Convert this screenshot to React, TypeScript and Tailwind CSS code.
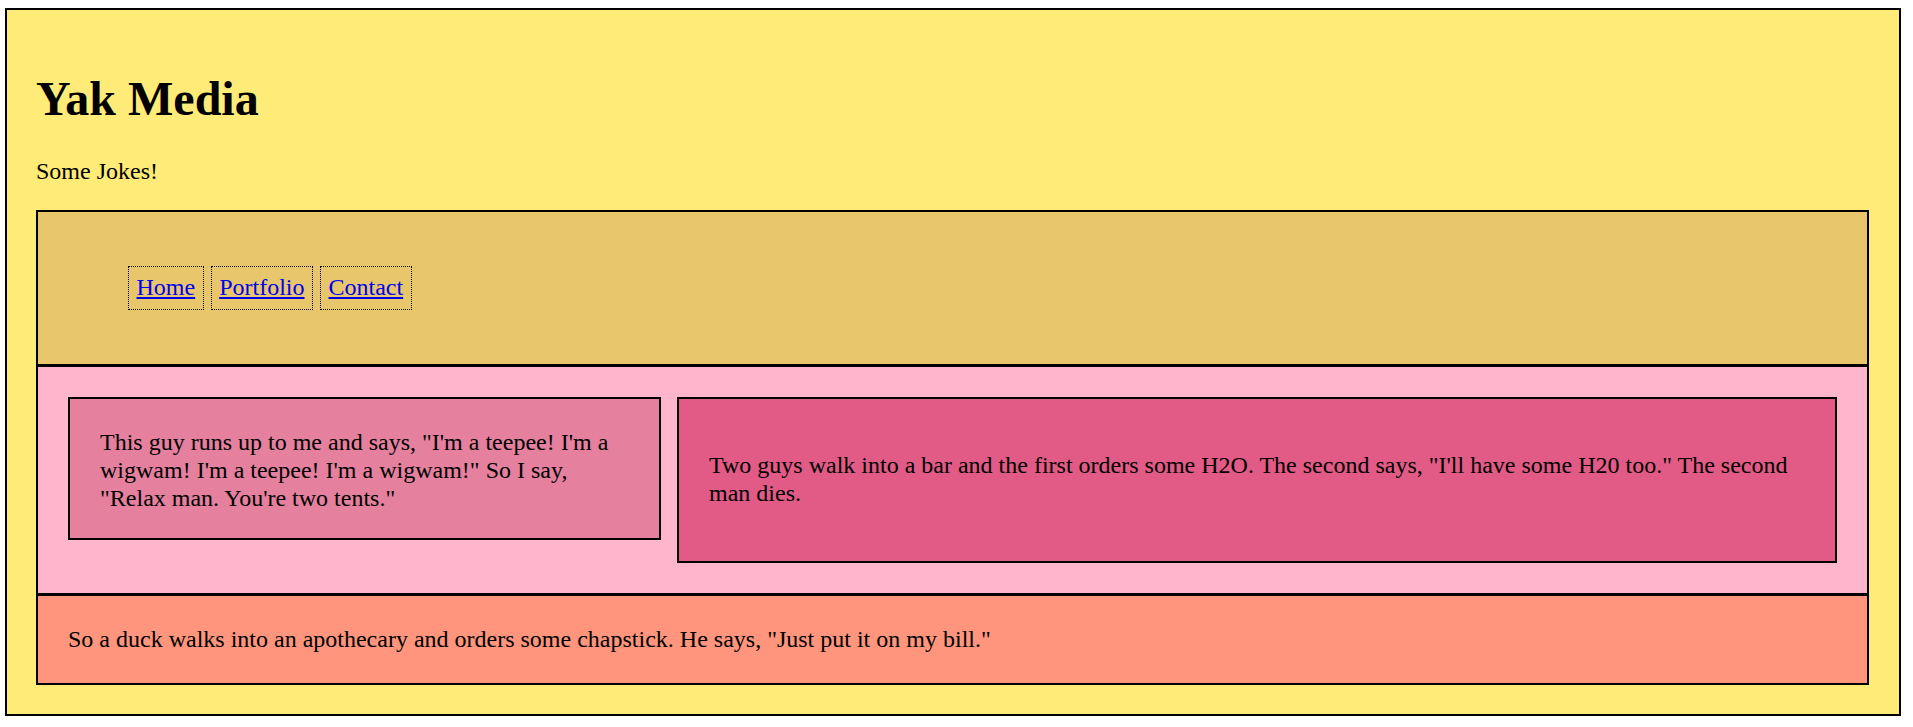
import React from 'react';

const links = ['Home', 'Portfolio', 'Contact'];

export default function App() {
  return (
    <div className="min-h-screen bg-white pt-[8px] pl-[5px] font-['Liberation_Serif',serif] text-[24px] leading-[27.6px] text-black">
      <div className="w-[1896px] border-2 border-black bg-[#ffeb77] pl-[29px] pr-[30px] pt-[29px] pb-[29px]">
        {/* Header */}
        <h1 className="my-[32px] text-[48px] font-bold leading-[55.2px]">Yak Media</h1>
        <p className="mb-[24px]">Some Jokes!</p>

        {/* Nav */}
        <nav className="border-2 border-b border-black bg-[#e8c66b] p-[30px]">
          <ul className="my-[24px] flex gap-[7px] pl-[60px]">
            {links.map((l) => (
              <li key={l}>
                <a
                  href="#"
                  className="block border border-dotted border-black p-[7.5px] text-[#0000ee] underline"
                >
                  {l}
                </a>
              </li>
            ))}
          </ul>
        </nav>

        {/* Jokes */}
        <main className="flex items-start gap-[16px] border-2 border-b border-black bg-[#ffb5cc] p-[30px]">
          <div className="w-[593px] shrink-0 border-2 border-black bg-[#e5809f] px-[30px] pt-[30px] pb-[26px]">
            This guy runs up to me and says, "I'm a teepee! I'm a wigwam! I'm a teepee! I'm a wigwam!" So I say,
            "Relax man. You're two tents."
          </div>
          <div className="flex-1 border-2 border-black bg-[#e25b86] px-[30px] py-[29px]">
            <p className="my-[24px]">
              Two guys walk into a bar and the first orders some H2O. The second says, "I'll have some H20 too." The
              second man dies.
            </p>
          </div>
        </main>

        {/* Footer */}
        <footer className="border-2 border-black bg-[#ff957d] p-[30px]">
          So a duck walks into an apothecary and orders some chapstick. He says, "Just put it on my bill."
        </footer>
      </div>
    </div>
  );
}
